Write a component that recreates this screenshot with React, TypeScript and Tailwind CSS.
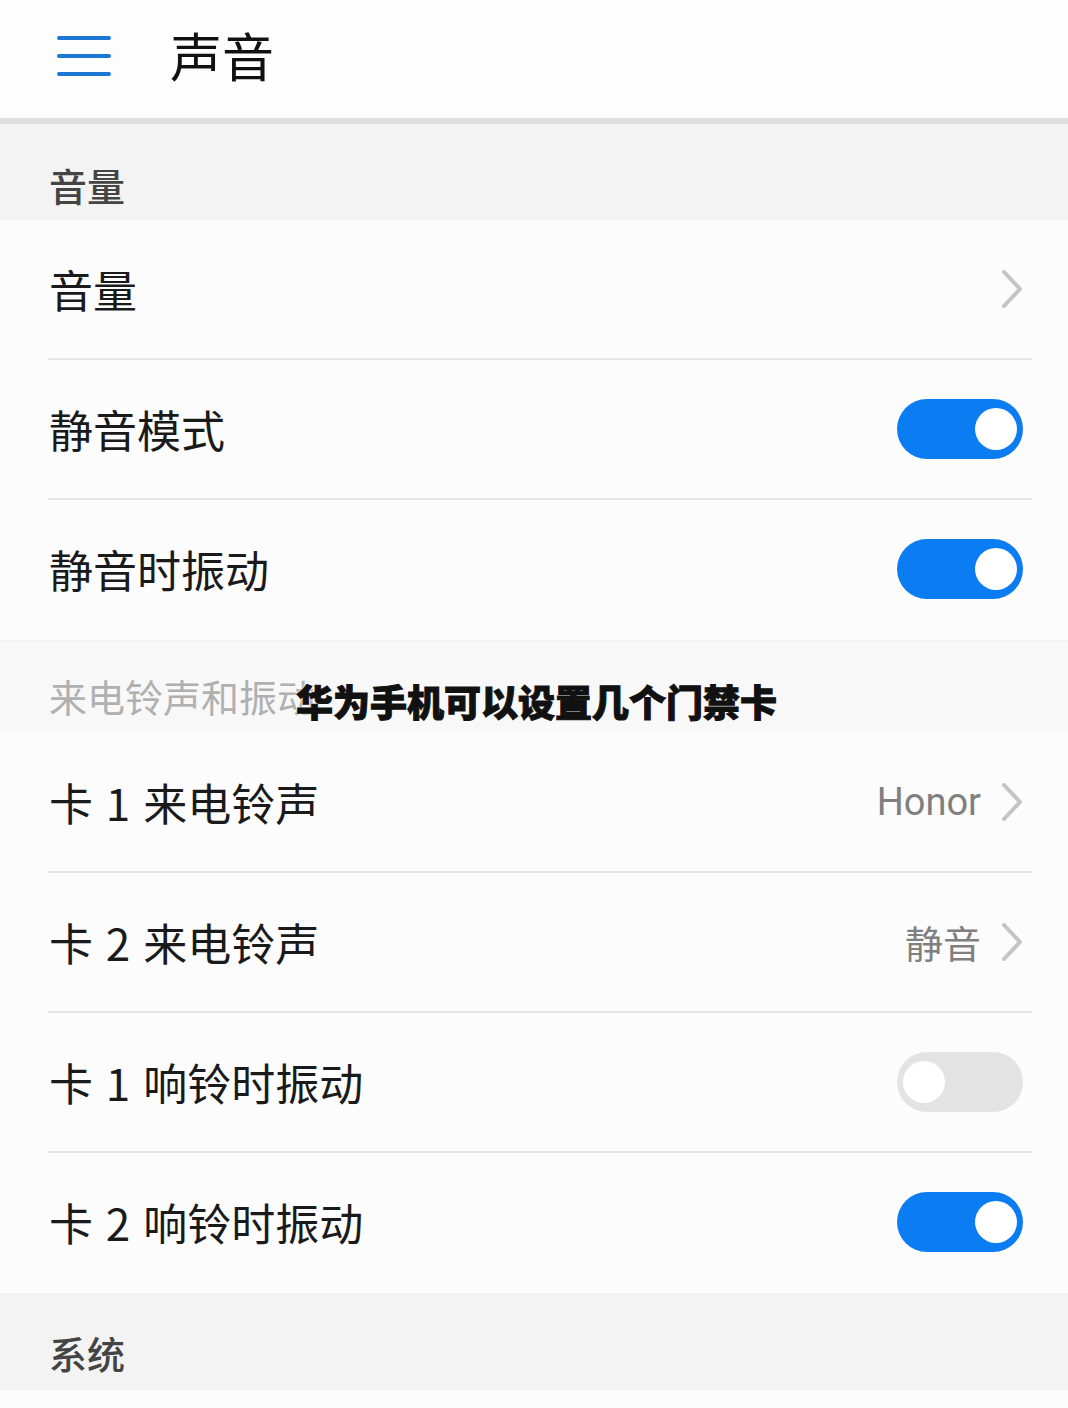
import React from "react";

const cjk = { fontFamily: '"Noto Sans CJK SC", "Noto Sans", sans-serif' };

function Toggle({ on }: { on: boolean }) {
  return (
    <div
      className={`flex h-[60px] w-[126px] items-center rounded-full px-[6px] ${
        on ? "justify-end bg-[#0b7cf2]" : "justify-start bg-[#e3e3e3]"
      }`}
    >
      <div className="h-[42px] w-[42px] rounded-full bg-white" />
    </div>
  );
}

function Chevron() {
  return (
    <svg width="22" height="38" viewBox="0 0 22 38" className="block">
      <path d="M3 2 L19 19 L3 36" fill="none" stroke="#c4c4c4" strokeWidth="4" strokeLinecap="round" strokeLinejoin="round" />
    </svg>
  );
}

function Row({
  label,
  right,
  divider = true,
}: {
  label: string;
  right: React.ReactNode;
  divider?: boolean;
}) {
  return (
    <div className="bg-[#fcfcfc]">
      <div className="flex h-[138px] items-center justify-between pl-[49px] pr-[45px]">
        <span className="text-[44px] leading-none text-[#1a1a1a] [word-spacing:3px]" style={cjk}>
          {label}
        </span>
        {right}
      </div>
      <div className={`ml-[48px] mr-[36px] h-[2px] ${divider ? "bg-[#e6e6e6]" : "bg-transparent"}`} />
    </div>
  );
}

function Value({ text, latin }: { text: string; latin?: boolean }) {
  return (
    <div className="flex items-center gap-[20px]">
      <span
        className="text-[38px] leading-none text-[#7f7f7f]"
        style={latin ? { fontFamily: 'Roboto, "Liberation Sans", sans-serif' } : cjk}
      >
        {text}
      </span>
      <Chevron />
    </div>
  );
}

export default function App() {
  return (
    <div className="relative h-[1408px] w-[1068px] overflow-hidden bg-[#fcfcfc]" style={cjk}>
      {/* Header */}
      <div className="flex h-[118px] items-center bg-[#fdfdfd] pl-[57px]">
        <svg width="54" height="40" viewBox="0 0 54 40" className="block -mt-[6px]">
          <line x1="2" y1="2" x2="52" y2="2" stroke="#1a78d2" strokeWidth="4" strokeLinecap="round" />
          <line x1="2" y1="20" x2="52" y2="20" stroke="#1a78d2" strokeWidth="4" strokeLinecap="round" />
          <line x1="2" y1="38" x2="52" y2="38" stroke="#1a78d2" strokeWidth="4" strokeLinecap="round" />
        </svg>
        <span className="ml-[59px] -mt-[8px] text-[52px] leading-none text-[#111]">声音</span>
      </div>
      <div className="h-[6px] bg-[#dfdfdf]" />

      {/* Section 1 */}
      <div className="flex h-[96px] items-end bg-[#f3f3f3] pb-[16px] pl-[49px]">
        <span className="text-[38px] font-medium leading-none text-[#444]">音量</span>
      </div>
      <Row label="音量" right={<Chevron />} />
      <Row label="静音模式" right={<Toggle on />} />
      <Row label="静音时振动" right={<Toggle on />} divider={false} />

      {/* Section 2 */}
      <div className="flex h-[93px] items-end border-t-2 border-[#f2f2f2] bg-[#f8f8f8] pb-[18px] pl-[49px]">
        <span className="text-[38px] leading-none text-[#b0b0b0]">来电铃声和振动</span>
      </div>
      <Row label="卡 1 来电铃声" right={<Value text="Honor" latin />} />
      <Row label="卡 2 来电铃声" right={<Value text="静音" />} />
      <Row label="卡 1 响铃时振动" right={<Toggle on={false} />} />
      <Row label="卡 2 响铃时振动" right={<Toggle on />} divider={false} />

      {/* Section 3 */}
      <div className="flex h-[97px] items-end bg-[#f3f3f3] pb-[18px] pl-[49px]">
        <span className="text-[38px] font-medium leading-none text-[#444]">系统</span>
      </div>

      {/* Watermark overlay */}
      <div
        className="absolute left-[296px] top-[681px] whitespace-nowrap text-[37px] font-black leading-[40px] text-[#111] [-webkit-text-stroke:1px_#111]"
        style={{ ...cjk, textShadow: "0 0 3px #fff, 0 0 3px #fff" }}
      >
        华为手机可以设置几个门禁卡
      </div>
    </div>
  );
}
